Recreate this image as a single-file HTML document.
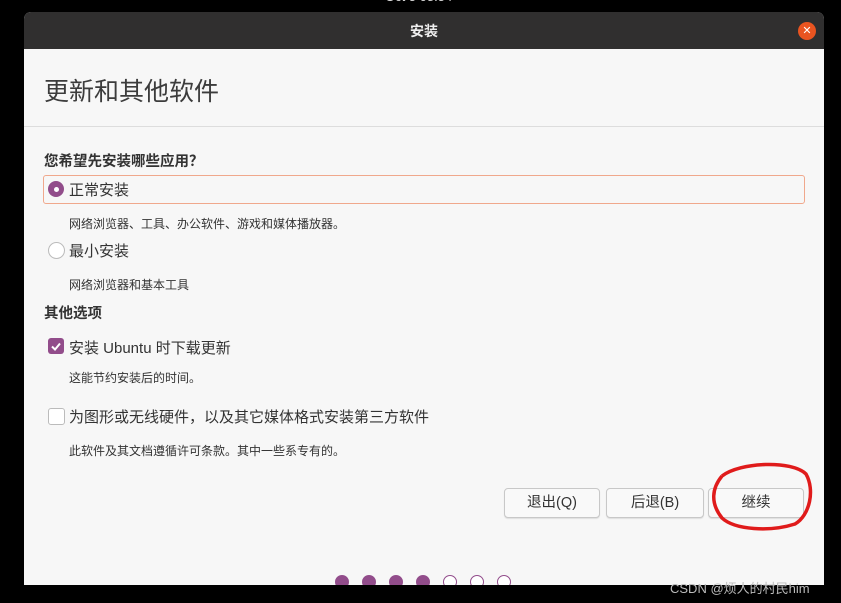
<!DOCTYPE html>
<html><head><meta charset="utf-8"><style>
body{margin:0;width:841px;height:603px;background:#000;position:relative;overflow:hidden;font-family:"Liberation Sans","Noto Sans CJK SC",sans-serif;}
.a{position:absolute;white-space:nowrap}
.win{position:absolute;left:24px;top:12px;width:800px;height:573px;background:#f7f7f7;border-radius:7px 7px 0 0;overflow:hidden}
.tb{position:absolute;left:0;top:0;width:800px;height:37px;background:#302f2f;color:#eee;font-size:14px;font-weight:bold;text-align:center;line-height:38px}
.btn{position:absolute;top:476px;height:28px;border:1px solid #c8c8c8;border-radius:4px;background:#f9f9f9;font-size:14.5px;color:#333;text-align:center;line-height:28px;box-shadow:0 1px 1px rgba(0,0,0,.1)}
.dot{position:absolute;top:563px;width:14px;height:14px;border-radius:50%;background:#924d8b;border:1px solid #924d8b;box-sizing:border-box}
.h{background:#fff}
.s{font-size:12px;color:#333}
.l{font-size:15px;color:#333}
</style></head><body>
<div class="a" style="left:385px;top:-11px;color:#ddd;font-size:13px">Oct 5 08:54</div>
<div class="win">
<div class="tb">安装<div style="position:absolute;right:8px;top:10px;width:18px;height:18px;border-radius:50%;background:#e95420;color:#fff;font-size:11px;line-height:18px;font-weight:normal">✕</div></div>
<div class="a" style="left:20px;top:60px;font-size:25px;color:#3c3c3c">更新和其他软件</div>
<div style="position:absolute;left:0;top:114px;width:800px;height:1px;background:#ddd"></div>
<div class="a" style="left:20px;top:138px;font-size:14.5px;font-weight:bold;color:#333">您希望先安装哪些应用？</div>
<div style="position:absolute;left:19px;top:163px;width:760px;height:27px;border:1.5px solid #f0a88c;border-radius:3px"></div>
<div style="position:absolute;left:24px;top:169px;width:16px;height:16px;border-radius:50%;background:#924d8b"><div style="position:absolute;left:5.5px;top:5.5px;width:5px;height:5px;border-radius:50%;background:#fff"></div></div>
<div class="a l" style="left:45px;top:167px">正常安装</div>
<div class="a s" style="left:45px;top:203px">网络浏览器、工具、办公软件、游戏和媒体播放器。</div>
<div style="position:absolute;left:24px;top:230px;width:15px;height:15px;border-radius:50%;background:#fff;border:1px solid #bbb"></div>
<div class="a l" style="left:45px;top:228px">最小安装</div>
<div class="a s" style="left:45px;top:264px">网络浏览器和基本工具</div>
<div class="a" style="left:20px;top:290px;font-size:14.5px;font-weight:bold;color:#333">其他选项</div>
<div style="position:absolute;left:24px;top:326px;width:16px;height:16px;border-radius:3px;background:#924d8b"><svg width="16" height="16"><path d="M4 8.5l3 3 5-6" stroke="#fff" stroke-width="2" fill="none"/></svg></div>
<div class="a l" style="left:45px;top:325px">安装 Ubuntu 时下载更新</div>
<div class="a s" style="left:45px;top:357px">这能节约安装后的时间。</div>
<div style="position:absolute;left:24px;top:396px;width:15px;height:15px;border-radius:3px;background:#fff;border:1px solid #bbb"></div>
<div class="a l" style="left:45px;top:394px">为图形或无线硬件，以及其它媒体格式安装第三方软件</div>
<div class="a s" style="left:45px;top:430px">此软件及其文档遵循许可条款。其中一些系专有的。</div>
<div class="btn" style="left:480px;width:94px">退出(Q)</div>
<div class="btn" style="left:582px;width:96px">后退(B)</div>
<div class="btn" style="left:684px;width:94px">继续</div>
<div class="dot" style="left:311px"></div><div class="dot" style="left:338px"></div><div class="dot" style="left:365px"></div><div class="dot" style="left:392px"></div>
<div class="dot h" style="left:419px"></div><div class="dot h" style="left:446px"></div><div class="dot h" style="left:473px"></div>
</div>
<svg class="a" style="left:0;top:0" width="841" height="603"><path d="M722 476C740 462 792 460 806 474C815 490 810 515 795 524C770 532 735 530 722 518C710 503 712 488 722 476" stroke="#e01b1b" stroke-width="3.5" fill="none"/></svg>
<div class="a" style="left:670px;top:578px;color:#bbb;font-size:13px">CSDN @烦人的村民him</div>
</body></html>
